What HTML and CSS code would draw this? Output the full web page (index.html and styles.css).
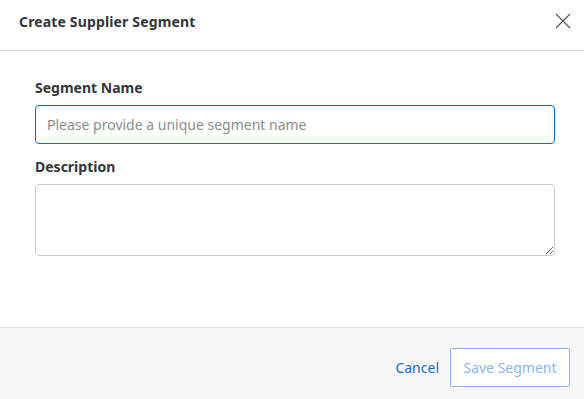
FILE: index.html
```html
<!DOCTYPE html>
<html>
<head>
<meta charset="utf-8">
<link rel="stylesheet" href="styles.css">
</head>
<body>
<div class="dialog">
  <header class="dialog-header">
    <h1 class="dialog-title">Create Supplier Segment</h1>
    <button class="close-btn" aria-label="Close">
      <svg width="16" height="16" viewBox="0 0 16 16"><path d="M1 1L15 15M15 1L1 15" stroke="#555" stroke-width="1.2" fill="none"/></svg>
    </button>
  </header>
  <main class="dialog-body">
    <label class="field-label">Segment Name</label>
    <input class="text-input" type="text" placeholder="Please provide a unique segment name">
    <label class="field-label desc-label">Description</label>
    <textarea class="text-area"></textarea>
  </main>
  <footer class="dialog-footer">
    <button class="link-btn">Cancel</button>
    <button class="save-btn" disabled>Save Segment</button>
  </footer>
</div>
</body>
</html>
```
FILE: styles.css
```css
* { box-sizing: border-box; }
html, body { margin: 0; padding: 0; }
body {
  font-family: "Noto Sans", "Open Sans", sans-serif;
  color: #32363a;
  background: #fff;
  width: 584px;
  height: 399px;
  overflow: hidden;
}
.dialog {
  display: flex;
  flex-direction: column;
  height: 399px;
}
.dialog-header {
  height: 51px;
  border-bottom: 1px solid #d9d9d9;
  display: flex;
  align-items: center;
  justify-content: space-between;
  padding: 0 13px 8px 19px;
}
.dialog-title {
  margin: 0;
  font-size: 14px;
  font-weight: 700;
  color: #32363a;
  letter-spacing: 0.15px;
}
.close-btn {
  border: 0;
  background: none;
  padding: 0;
  width: 16px;
  height: 16px;
  display: flex;
}
.dialog-body {
  flex: 1;
  display: flex;
  flex-direction: column;
  padding: 27px 29px 0 35px;
}
.field-label {
  font-size: 14px;
  font-weight: 700;
  color: #32363a;
  line-height: 20px;
  margin-bottom: 7px;
}
.desc-label { margin-top: 13px; }
.text-input {
  height: 39px;
  border: 1px solid #0a6ed1;
  border-radius: 4px;
  padding: 0 11px;
  font-family: inherit;
  font-size: 14px;
  color: #32363a;
  outline: none;
}
.text-input::placeholder { color: #8c8c8c; }
.text-area {
  height: 72px;
  border: 1px solid #ccc;
  border-radius: 4px;
  font-family: inherit;
  font-size: 14px;
  resize: vertical;
}
.dialog-footer {
  height: 72px;
  border-top: 1px solid #e0e0e0;
  background: #f7f7f7;
  display: flex;
  align-items: flex-start;
  justify-content: flex-end;
  gap: 11px;
  padding: 20px 14px 0 0;
}
.link-btn {
  border: 0;
  background: none;
  padding: 0;
  height: 39px;
  font-family: inherit;
  font-size: 14px;
  color: #0a6ed1;
}
.save-btn {
  width: 120px;
  height: 39px;
  border: 1px solid #89b6e6;
  border-radius: 2px;
  background: #fff;
  font-family: inherit;
  font-size: 14px;
  color: #89b6e6;
}
```
